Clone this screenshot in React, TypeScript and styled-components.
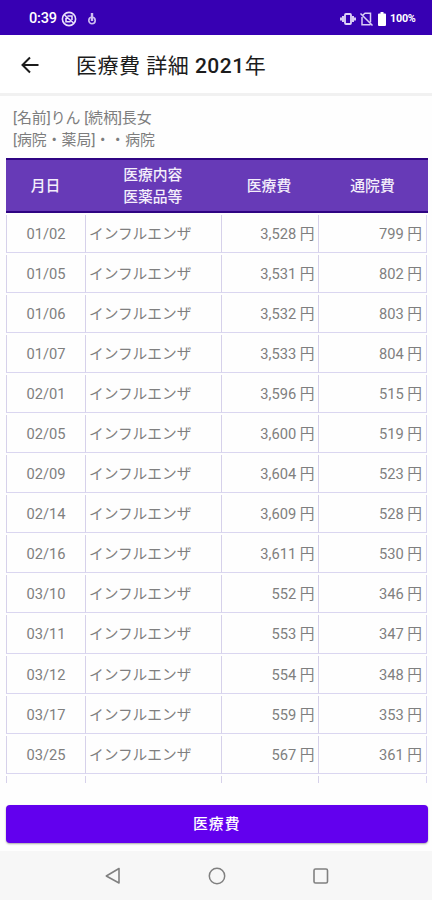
import React from "react";
import styled, { createGlobalStyle } from "styled-components";

const GlobalStyle = createGlobalStyle`
  * { box-sizing: border-box; }
  body {
    margin: 0;
    background: #fff;
    font-family: Roboto, "Noto Sans CJK JP", sans-serif;
  }
`;

const Screen = styled.main`
  width: 432px;
  height: 900px;
  display: flex;
  flex-direction: column;
  background: #fefefe;
  overflow: hidden;
`;

const StatusBar = styled.header`
  height: 35px;
  flex: none;
  background: #3700b3;
  color: #fff;
  display: flex;
  align-items: center;
  padding: 2px 15px 0 29px;
  svg { display: block; flex: none; }
`;

const Clock = styled.span`
  width: 32px;
  font-size: 14.5px;
  font-weight: 500;
  letter-spacing: -0.2px;
`;

const Notifications = styled.div`
  display: flex;
  align-items: center;
  gap: 10px;
`;

const StatusGroup = styled.div`
  display: flex;
  align-items: center;
  gap: 2px;
  margin-left: auto;
`;

const Percent = styled.span`
  width: 27px;
  font-size: 10.8px;
  font-weight: 700;
  letter-spacing: -0.25px;
`;

const AppBar = styled.div`
  height: 61px;
  flex: none;
  display: flex;
  align-items: center;
  padding: 2px 0 0 20px;
  border-bottom: 3px solid #f1f1f1;
  background: #fff;
`;

const Title = styled.h1`
  margin: 1px 0 0 36px;
  color: #1c1c1c;
  font-size: 21px;
  line-height: 30px;
  font-weight: 500;
  letter-spacing: 0.5px;
  white-space: pre;
`;

const TitleKanji = styled.span`
  font-weight: 400;
`;

const Info = styled.div`
  height: 62px;
  flex: none;
  padding: 11px 13px 0;
  font-size: 14.9px;
  line-height: 22px;
  color: #7d7d7d;
`;

const columns = "79px 135.5px 97px 1fr";

const TableHead = styled.div`
  height: 55px;
  flex: none;
  margin: 0 4.5px 0 6px;
  padding-top: 2px;
  display: grid;
  grid-template-columns: ${columns};
  align-items: center;
  border-top: 2px solid #2f0483;
  border-bottom: 2px solid #2f0483;
  background: #673ab7;
  color: #f4effb;
  font-size: 14.8px;
  line-height: 21.5px;
  font-weight: 500;
  text-align: center;
`;

const TableBody = styled.div`
  height: 570px;
  flex: none;
  overflow: hidden;
  margin: 0 5px 0 6px;
`;

const Row = styled.div`
  height: 40.06px;
  padding-top: 2px;
  display: grid;
  grid-template-columns: ${columns};
`;

const Cell = styled.div<{ $align: "left" | "center" | "right" }>`
  border-left: 1px solid #d6d1ea;
  border-bottom: 1px solid #dad6f0;
  padding: ${(p) => (p.$align === "right" ? "2px 3px 0 0" : "2px 3px 0")};
  color: #7f7f7f;
  font-size: 14.7px;
  line-height: 35px;
  text-align: ${(p) => p.$align};
  white-space: nowrap;
  &:last-child {
    padding-right: 4px;
    border-right: 1px solid #dad6f0;
  }
`;

const Action = styled.button`
  height: 38px;
  flex: none;
  margin: 22px 4.5px 0 6px;
  border: 0;
  border-radius: 4px;
  background: #6200ee;
  color: #fff;
  font: 500 14.8px/38px Roboto, "Noto Sans CJK JP", sans-serif;
  letter-spacing: 1.1px;
  padding: 0;
  box-shadow: 0 1px 2px rgba(0, 0, 0, 0.35);
`;

const NavBar = styled.nav`
  height: 49px;
  margin-top: auto;
  flex: none;
  display: flex;
  align-items: center;
  gap: 86px;
  padding-left: 104px;
  background: #f7f7f7;
  svg { display: block; }
`;

const records: [string, string, string][] = [
  ["01/02", "3,528", "799"],
  ["01/05", "3,531", "802"],
  ["01/06", "3,532", "803"],
  ["01/07", "3,533", "804"],
  ["02/01", "3,596", "515"],
  ["02/05", "3,600", "519"],
  ["02/09", "3,604", "523"],
  ["02/14", "3,609", "528"],
  ["02/16", "3,611", "530"],
  ["03/10", "552", "346"],
  ["03/11", "553", "347"],
  ["03/12", "554", "348"],
  ["03/17", "559", "353"],
  ["03/25", "567", "361"],
];

export default function App() {
  return (
    <Screen>
      <GlobalStyle />
      <StatusBar>
        <Clock>0:39</Clock>
        <Notifications>
          <svg width="16" height="16" viewBox="0 0 16 16" fill="none" stroke="#e9e0fa">
            <circle cx="8" cy="8" r="6.6" strokeWidth="1.6" />
            <path d="M3.5 4l9 8M5 6.8v4h4.5M6.5 5H11v4" strokeWidth="1.6" />
          </svg>
          <svg width="10" height="12" viewBox="0 0 10 12" fill="none" stroke="#cdbdf0">
            <path d="M5 0v8" strokeWidth="2.4" />
            <circle cx="5" cy="7.5" r="3.2" strokeWidth="1.6" />
          </svg>
        </Notifications>
        <StatusGroup>
          <svg width="16" height="12" viewBox="0 0 16 12" fill="none" stroke="#e0d6f7">
            <rect x="5" y="1" width="6" height="10" rx="1" strokeWidth="1.8" />
            <path d="M3 3v6M1 4.5v3M13 3v6M15 4.5v3" strokeWidth="1.9" />
          </svg>
          <svg width="16" height="14" viewBox="0 0 16 14" fill="none" stroke="#d9cdf5" strokeWidth="1.5">
            <path d="M5 3l2-1.800h5.500v9M4 5v7.700h8.500M2.500 1.500l12 12" />
          </svg>
          <svg width="12" height="14" viewBox="0 0 12 14" fill="#fff">
            <path d="M4.500 0h3v1.500H9a1 1 0 0 1 1 1V13a1 1 0 0 1-1 1H3a1 1 0 0 1-1-1V2.500a1 1 0 0 1 1-1h1.500z" />
          </svg>
          <Percent>100%</Percent>
        </StatusGroup>
      </StatusBar>
      <AppBar>
        <svg width="20" height="18" viewBox="0 0 20 18" fill="none" stroke="#1c1c1c" strokeWidth="2">
          <path d="M18.500 9H3M10 1.500L2.500 9l7.500 7.500" />
        </svg>
        <Title><TitleKanji>医療費 詳細 </TitleKanji>2021<TitleKanji>年</TitleKanji></Title>
      </AppBar>
      <Info>
        <div>[名前]りん [続柄]長女</div>
        <div>[病院・薬局]・・病院</div>
      </Info>
      <TableHead>
        <div>月日</div>
        <div>医療内容<br />医薬品等</div>
        <div>医療費</div>
        <div>通院費</div>
      </TableHead>
      <TableBody>
        {records.map(([date, cost, travel]) => (
          <Row key={date}>
            <Cell $align="center">{date}</Cell>
            <Cell $align="left">インフルエンザ</Cell>
            <Cell $align="right">{cost} 円</Cell>
            <Cell $align="right">{travel} 円</Cell>
          </Row>
        ))}
        <Row>
          <Cell $align="center" />
          <Cell $align="left" />
          <Cell $align="right" />
          <Cell $align="right" />
        </Row>
      </TableBody>
      <Action>医療費</Action>
      <NavBar>
        <svg width="18" height="18" viewBox="0 0 18 18" fill="none" stroke="#808080" strokeWidth="1.6" strokeLinejoin="round">
          <path d="M15 1.500v14.500L2.300 9z" />
        </svg>
        <svg width="18" height="18" viewBox="0 0 18 18" fill="none" stroke="#808080" strokeWidth="1.5">
          <circle cx="9" cy="9" r="7.700" />
        </svg>
        <svg width="18" height="18" viewBox="0 0 18 18" fill="none" stroke="#808080" strokeWidth="1.6">
          <rect x="2" y="2" width="13.500" height="14" rx="1.500" />
        </svg>
      </NavBar>
    </Screen>
  );
}
